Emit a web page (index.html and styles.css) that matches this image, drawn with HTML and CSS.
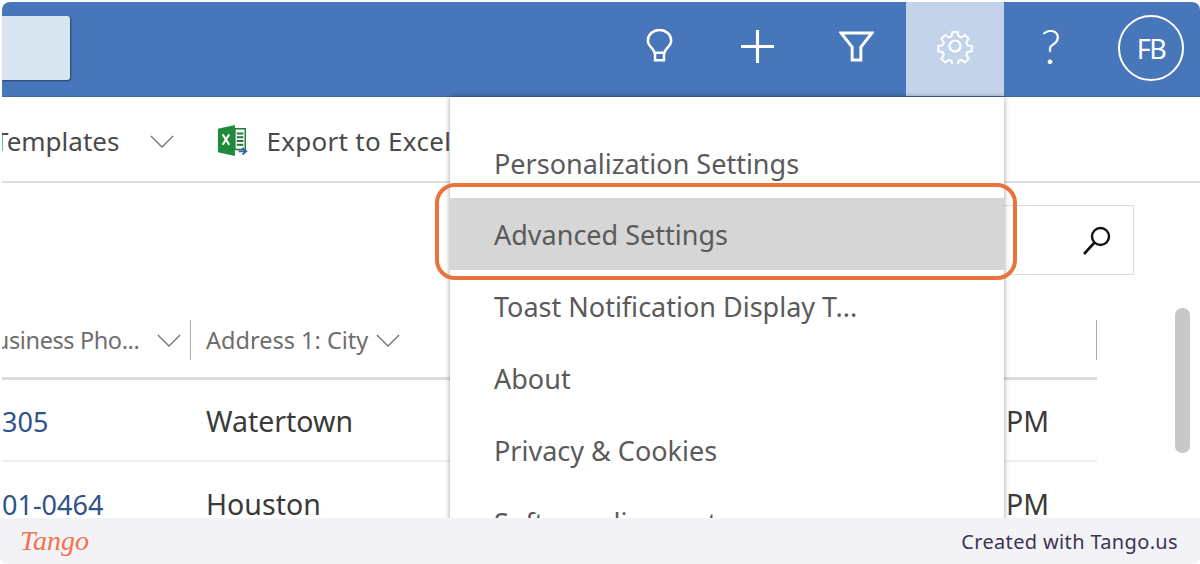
FILE: index.html
```html
<!DOCTYPE html>
<html lang="en">
<head>
    <meta charset="UTF-8">
    <title>Advanced Settings</title>
    <link rel="stylesheet" href="styles.css">
</head>
<body>
    <div class="shot">
        <div class="app">
            <header class="topbar">
                <div class="search-tile"></div>
                <div class="top-icons">
                    <div class="top-icon">
                        <svg width="27" height="34" viewBox="0 0 30 38" fill="none" stroke="#fff" stroke-width="2.800"><path d="M9.500 26.500C8.500 21.500 2 19 2 13a13 12 0 0 1 26 0c0 6-6.500 8.500-7.500 13.500z"/><path d="M10 26.500v8.500h10v-8.500"/></svg>
                    </div>
                    <div class="top-icon">
                        <svg width="35" height="35" viewBox="0 0 36 36" stroke="#fff" stroke-width="3.200"><path d="M18 1v34M1 18h34"/></svg>
                    </div>
                    <div class="top-icon">
                        <svg width="35" height="31" viewBox="0 0 36 32" fill="none" stroke="#fff" stroke-width="3"><path d="M2 2h32L22.500 16.500V30h-9V16.500z"/></svg>
                    </div>
                    <div class="top-icon top-icon-active">
                        <svg width="36" height="36" viewBox="0 0 36 36" fill="none" stroke="#fff" stroke-width="2.200"><circle cx="18" cy="18" r="5.500"/><path d="M15 2h6l1 5 3 1.300 4.300-2.800 4.200 4.200-2.800 4.300 1.300 3 5 1v6l-5 1-1.300 3 2.800 4.300-4.200 4.200-4.300-2.800-3 1.300-1 5h-6l-1-5-3-1.300-4.300 2.800-4.200-4.200 2.800-4.300-1.300-3-5-1v-6l5-1 1.300-3-2.800-4.300 4.200-4.200 4.300 2.800 3-1.300z" transform="translate(2.200 2.200) scale(.88)"/></svg>
                    </div>
                    <div class="top-icon top-help">?</div>
                    <div class="avatar">FB</div>
                </div>
            </header>

            <div class="cmdbar">
                <span class="cmd-text cmd-templates">Templates</span>
                <svg class="chev cmd-chev" width="24" height="13" viewBox="0 0 26 14"><path d="M1 1l12 12L25 1"/></svg>
                <svg class="excel" width="32" height="32" viewBox="0 0 34 34">
                    <path d="M1 4l18-4v33L1 29z" fill="#1f8a3b"/>
                    <path d="M19 4h11v22H19z" fill="#fff" stroke="#1f7a3a" stroke-width="1.500"/>
                    <path d="M21 9h7M21 13h7M21 17h7M21 21h7" stroke="#1f7a3a" stroke-width="2"/>
                    <path d="M6 10l7 11M13 10L6 21" stroke="#fff" stroke-width="2.200"/>
                    <path d="M23 28h7M27 24.500l4 3.500-4 3.500" fill="none" stroke="#2b62ad" stroke-width="2"/>
                </svg>
                <span class="cmd-text cmd-export">Export to Excel</span>
            </div>

            <div class="filter-row">
                <div class="grid-search">
                    <svg width="34" height="34" viewBox="0 0 34 34" fill="none" stroke="#111"><circle cx="20.500" cy="13.500" r="8.500" stroke-width="2.400"/><path d="M14.500 19.500L4 31" stroke-width="2.600"/></svg>
                </div>
            </div>

            <div class="grid">
                <div class="grid-head">
                    <div class="head-phone">
                        <span class="head-label head-clip">Business Pho...</span>
                        <svg class="chev" width="24" height="13" viewBox="0 0 26 14"><path d="M1 1l12 12L25 1"/></svg>
                    </div>
                    <div class="head-city">
                        <span class="head-label">Address 1: City</span>
                        <svg class="chev" width="24" height="13" viewBox="0 0 26 14"><path d="M1 1l12 12L25 1"/></svg>
                    </div>
                </div>
                <div class="grid-row">
                    <a class="cell-phone">305</a>
                    <span class="cell">Watertown</span>
                    <span class="cell">PM</span>
                </div>
                <div class="grid-row grid-row-last">
                    <a class="cell-phone">01-0464</a>
                    <span class="cell">Houston</span>
                    <span class="cell">PM</span>
                </div>
            </div>

            <div class="scroll-thumb"></div>

            <ul class="menu">
                <li class="menu-first">Personalization Settings</li>
                <li class="menu-hover">Advanced Settings</li>
                <li>Toast Notification Display T...</li>
                <li>About</li>
                <li>Privacy &amp; Cookies</li>
                <li>Software license terms</li>
            </ul>
            <div class="ring"></div>
        </div>

        <footer class="tango-bar">
            <span class="tango-logo">Tango</span>
            <span class="tango-credit">Created with Tango.us</span>
        </footer>
    </div>
</body>
</html>
```

FILE: styles.css
```css
* {
    box-sizing: border-box;
}

body {
    margin: 0;
    background: #fff;
    font-family: "Noto Sans", "Open Sans", sans-serif;
}

.shot {
    width: 1200px;
    height: 564px;
    display: flex;
    flex-direction: column;
    overflow: hidden;
    border-radius: 0 0 8px 8px;
}

.app {
    position: relative;
    height: 518px;
    padding: 2px 0 0 2px;
    overflow: hidden;
    background: #fff;
}

/* top bar */
.topbar {
    height: 95px;
    display: flex;
    justify-content: space-between;
    align-items: center;
    background: #4776ba;
    border-bottom: 1px solid #3c68a8;
    border-radius: 8px 8px 0 0;
}

.search-tile {
    width: 68px;
    height: 64px;
    margin-bottom: 2px;
    background: #d9e4f1;
    border-radius: 0 3px 3px 0;
    box-shadow: 1px 1px 2px rgba(0, 0, 0, 0.45);
}

.top-icons {
    display: flex;
    align-items: center;
    height: 100%;
    padding-right: 16px;
}

.top-icon {
    width: 98.500px;
    height: 100%;
    padding-bottom: 6px;
    display: flex;
    align-items: center;
    justify-content: center;
    color: #fff;
}

.top-icon-active {
    background: #c3d3e9;
}

.top-help {
    width: 94px;
    font-family: Lato, "Noto Sans", sans-serif;
    font-size: 47px;
    font-weight: 300;
}

.avatar {
    width: 66px;
    height: 66px;
    margin: 0 0 2px 20px;
    border: 2px solid #fff;
    border-radius: 50%;
    display: flex;
    align-items: center;
    justify-content: center;
    color: #fff;
    font-size: 27px;
    letter-spacing: -1.500px;
}

/* command bar */
.cmdbar {
    height: 86px;
    display: flex;
    align-items: center;
    border-bottom: 2px solid #dedede;
    overflow: hidden;
    padding-top: 4px;
}

.cmd-text {
    font-size: 26px;
    color: #4a4a4a;
    white-space: nowrap;
}

.cmd-templates {
    margin-left: -8px;
}

.cmd-export {
    letter-spacing: 0.300px;
}

.cmd-chev {
    margin: 0 43px 0 31px;
}

.excel {
    margin-right: 17px;
}

.chev {
    flex: none;
    fill: none;
    stroke: #777;
    stroke-width: 1.500;
}

/* search row */
.filter-row {
    height: 137px;
    padding: 22px 66px 0 0;
    display: flex;
    justify-content: flex-end;
}

.grid-search {
    width: 240px;
    height: 70px;
    padding-right: 19px;
    display: flex;
    align-items: center;
    justify-content: flex-end;
    border: 1px solid #dcdcdc;
}

/* list */
.grid {
    width: 1095px;
}

.grid-head {
    height: 60px;
    display: flex;
    border-bottom: 3px solid #dcdcdc;
}

.head-phone {
    width: 189px;
    height: 40px;
    display: flex;
    align-items: center;
    justify-content: space-between;
    padding-right: 9px;
    border-right: 1px solid #aaa;
    overflow: hidden;
}

.head-city {
    flex: 1;
    height: 40px;
    padding-left: 15px;
    display: flex;
    align-items: center;
    gap: 8px;
    border-right: 1px solid #aaa;
}

.head-label {
    font-size: 23.500px;
    color: #6e6e6e;
    white-space: nowrap;
}

.head-clip {
    margin-left: -22px;
    letter-spacing: -0.400px;
}

.grid-row {
    height: 82px;
    padding-top: 2px;
    display: grid;
    grid-template-columns: 204px 800px auto;
    align-items: center;
    border-bottom: 2px solid #efefef;
    font-size: 28.500px;
}

.grid-row-last {
    border-bottom: 0;
}

.cell-phone {
    color: #2f5288;
    font-size: 27px;
}

.cell {
    color: #3a3a3a;
}

.scroll-thumb {
    position: absolute;
    left: 1175px;
    top: 308px;
    width: 15px;
    height: 145px;
    background: #c8c8c8;
    border-radius: 7px;
}

/* settings flyout */
.menu {
    position: absolute;
    left: 450px;
    top: 97px;
    width: 554px;
    height: 460px;
    margin: 0;
    padding: 32px 0 0;
    list-style: none;
    background: #fff;
    box-shadow: 0 0 5px rgba(0, 0, 0, 0.4);
}

.menu li {
    height: 72px;
    padding-left: 44px;
    display: flex;
    align-items: center;
    font-size: 27px;
    color: #5a5a5a;
    white-space: nowrap;
}

.menu .menu-first {
    height: 69px;
}

.menu .menu-hover {
    background: #d6d6d6;
}

.ring {
    position: absolute;
    left: 435px;
    top: 183px;
    width: 582px;
    height: 97px;
    border: 4px solid #e8743b;
    border-radius: 20px;
}

/* footer */
.tango-bar {
    flex: 1;
    display: flex;
    align-items: center;
    justify-content: space-between;
    padding: 0 22px 0 20px;
    background: #f3f2f7;
}

.tango-logo {
    font-family: "Liberation Serif", serif;
    font-style: italic;
    font-size: 28px;
    color: #f0734f;
}

.tango-credit {
    font-size: 20px;
    letter-spacing: 0.350px;
    color: #3b3553;
}
```
